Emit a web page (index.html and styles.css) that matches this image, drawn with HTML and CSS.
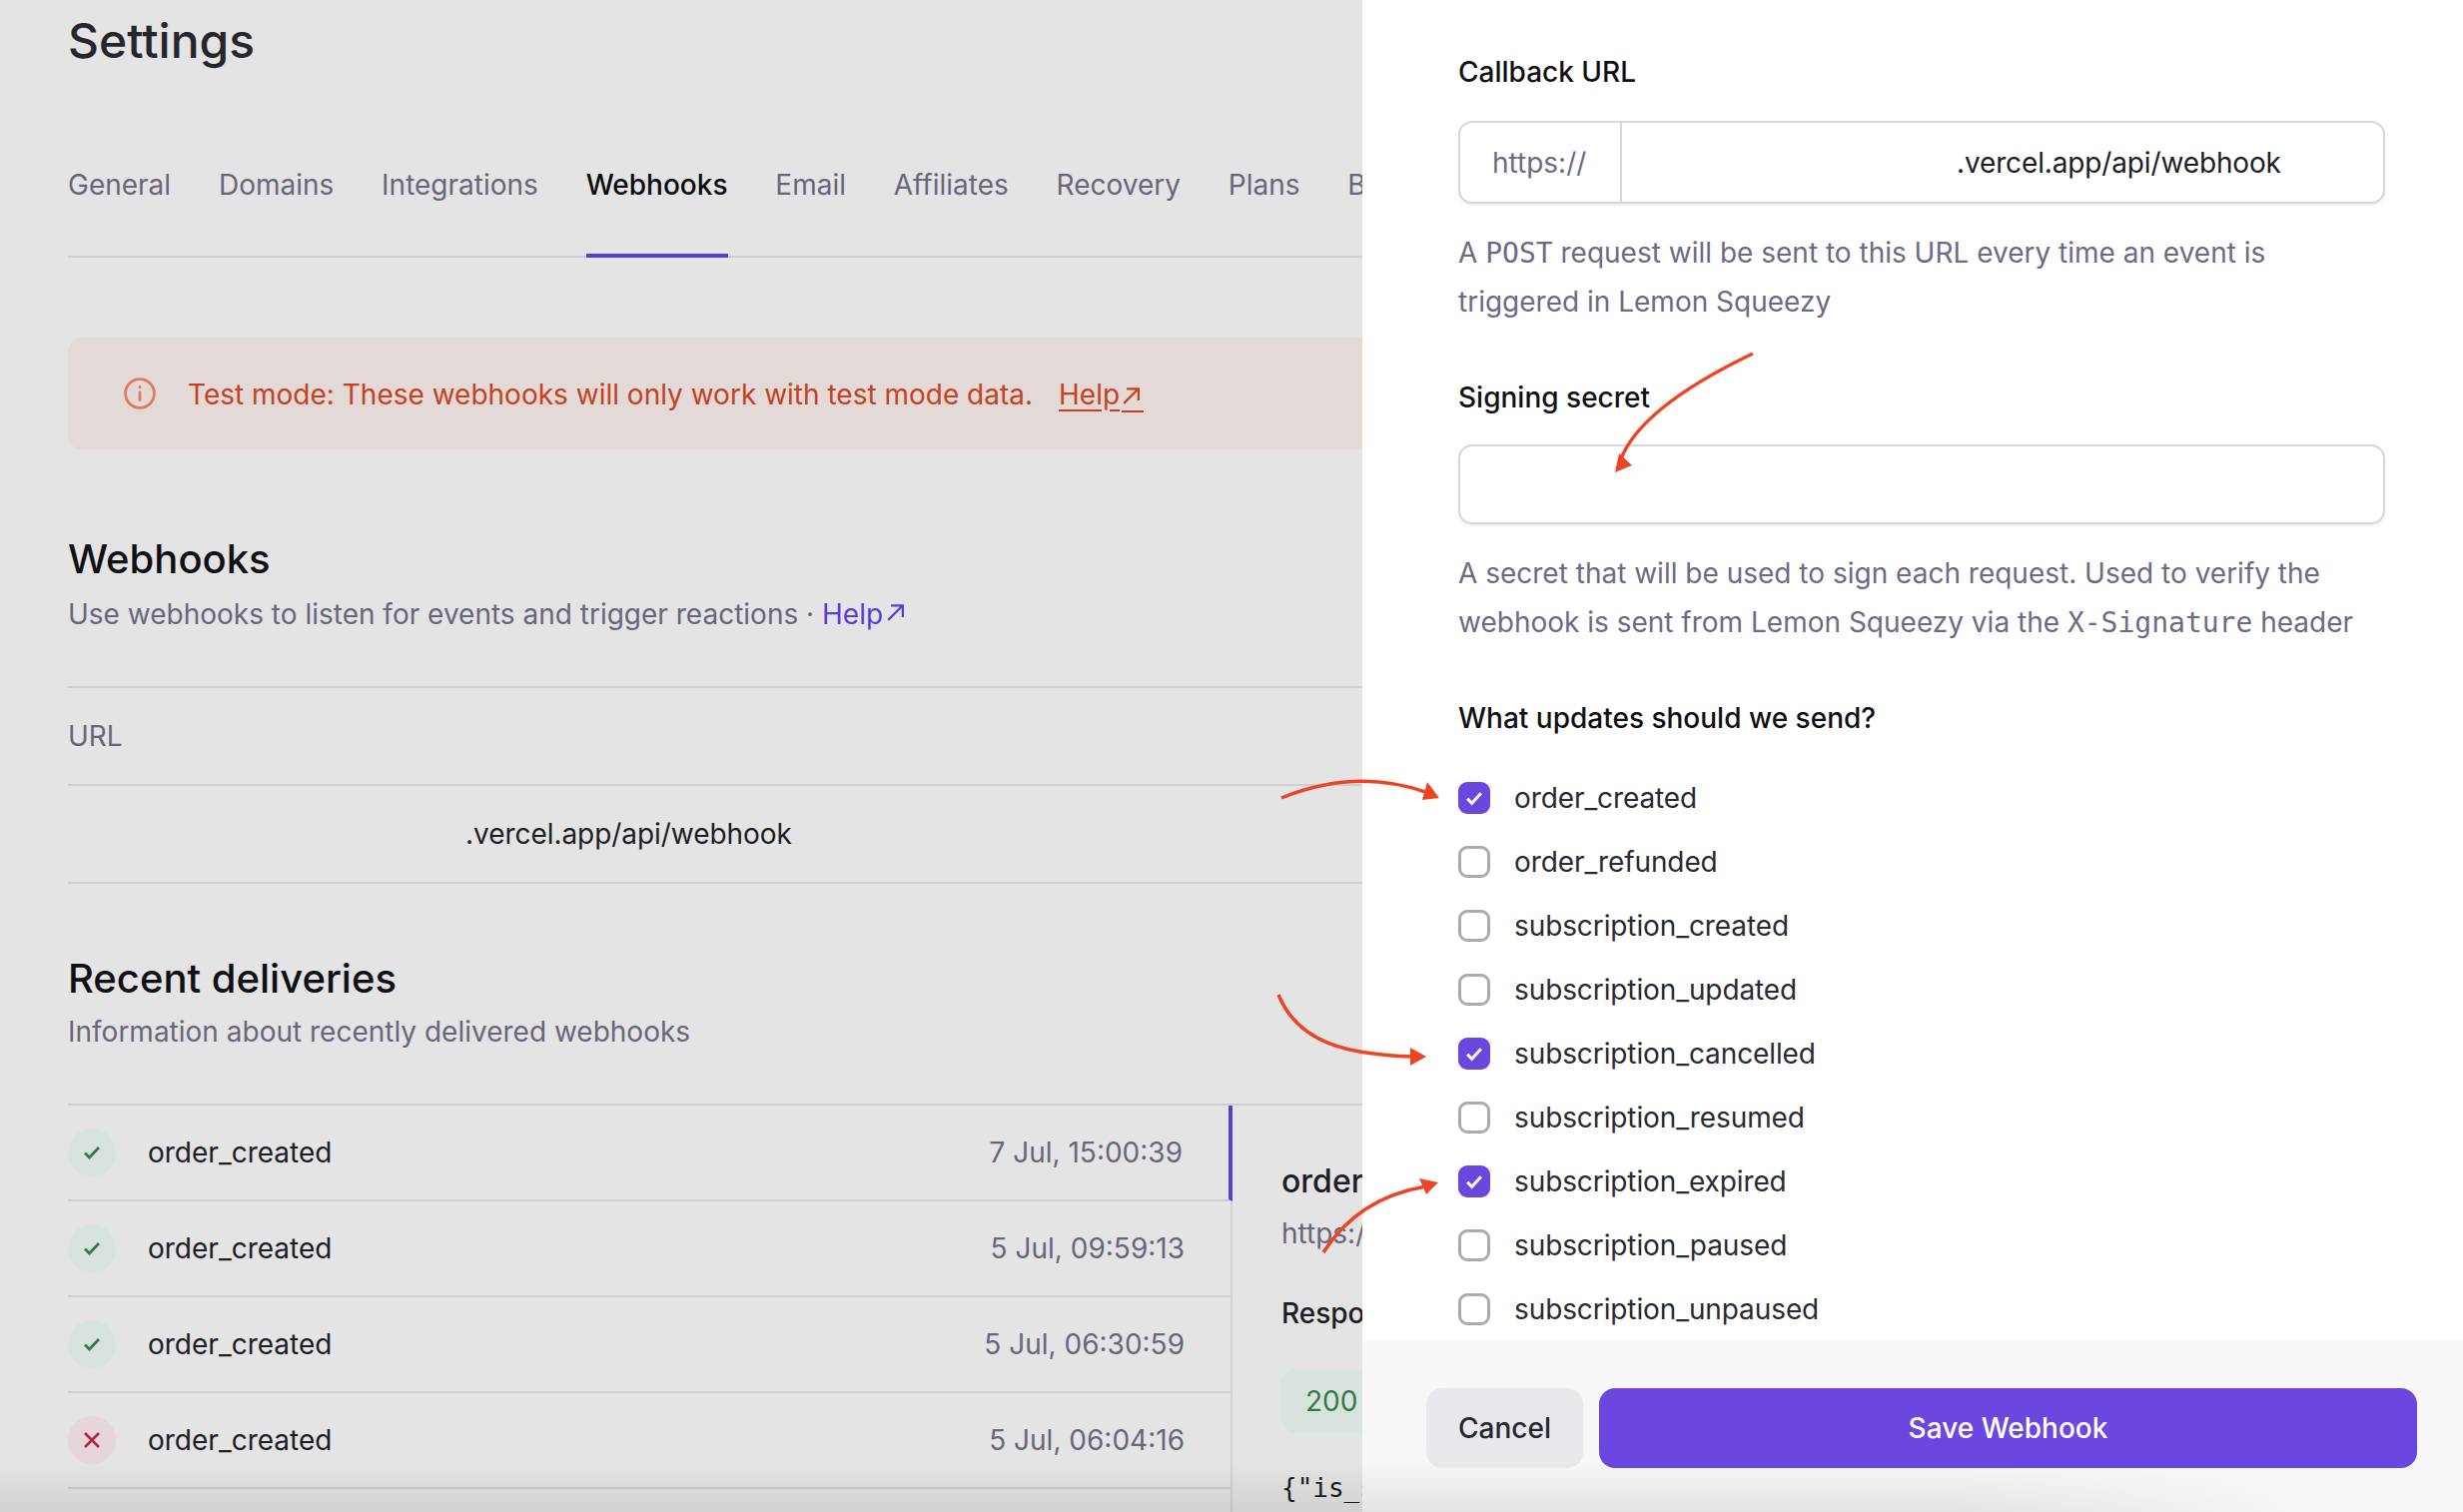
FILE: index.html
```html
<!DOCTYPE html>
<html lang="en">
<head>
    <meta charset="UTF-8" />
    <title>Settings - Webhooks</title>
    <link rel="stylesheet" href="styles.css">
</head>
<body>
    <div id="page">
        <main id="settings">
            <h1>Settings</h1>
            <nav class="tabs">
                <a href="#">General</a>
                <a href="#">Domains</a>
                <a href="#">Integrations</a>
                <a href="#" class="active">Webhooks</a>
                <a href="#">Email</a>
                <a href="#">Affiliates</a>
                <a href="#">Recovery</a>
                <a href="#">Plans</a>
                <a href="#">Billing</a>
            </nav>

            <div class="alert">
                <svg class="alert-icon" viewBox="0 0 32 32" fill="none" stroke="currentColor" stroke-width="2.800" stroke-linecap="round">
                    <circle cx="16" cy="16" r="14.400" />
                    <path d="M16 15v7.500" />
                    <path d="M16 9.500v.5" />
                </svg>
                <span>Test mode: These webhooks will only work with test mode data.</span>
                <a href="#" class="alert-help">Help<svg class="ext" viewBox="0 0 16 16" fill="none" stroke="currentColor" stroke-width="2"><path d="M2 15L14.500 2.500M4.500 2h10.500v10.500" /></svg></a>
            </div>

            <section class="webhooks">
                <h2>Webhooks</h2>
                <p class="sub">Use webhooks to listen for events and trigger reactions · <a href="#" class="link">Help<svg class="ext" viewBox="0 0 16 16" fill="none" stroke="currentColor" stroke-width="2"><path d="M2 15L14.500 2.500M4.500 2h10.500v10.500" /></svg></a></p>
                <div class="url-head">URL</div>
                <div class="url-row">.vercel.app/api/webhook</div>
            </section>

            <section class="deliveries">
                <h2>Recent deliveries</h2>
                <p class="sub">Information about recently delivered webhooks</p>
                <div class="delivery-grid">
                    <div class="delivery-list">
                        <div class="delivery active">
                            <span class="status ok"><svg viewBox="0 0 18 14" fill="none" stroke="currentColor" stroke-width="2.800"><path d="M2 7.500l4.500 4.500L16 2" /></svg></span>
                            <span class="event">order_created</span>
                            <span class="time">7 Jul, 15:00:39</span>
                        </div>
                        <div class="delivery">
                            <span class="status ok"><svg viewBox="0 0 18 14" fill="none" stroke="currentColor" stroke-width="2.800"><path d="M2 7.500l4.500 4.500L16 2" /></svg></span>
                            <span class="event">order_created</span>
                            <span class="time">5 Jul, 09:59:13</span>
                        </div>
                        <div class="delivery">
                            <span class="status ok"><svg viewBox="0 0 18 14" fill="none" stroke="currentColor" stroke-width="2.800"><path d="M2 7.500l4.500 4.500L16 2" /></svg></span>
                            <span class="event">order_created</span>
                            <span class="time">5 Jul, 06:30:59</span>
                        </div>
                        <div class="delivery">
                            <span class="status bad"><svg viewBox="0 0 18 18" fill="none" stroke="currentColor" stroke-width="2.600"><path d="M2 2l14 14M16 2L2 16" /></svg></span>
                            <span class="event">order_created</span>
                            <span class="time">5 Jul, 06:04:16</span>
                        </div>
                    </div>
                    <div class="delivery-detail">
                        <h3>order_created</h3>
                        <p class="detail-url">https://hooks.example.vercel.app/api/webhook</p>
                        <h4>Response</h4>
                        <div class="code-badge">200 OK</div>
                        <pre>{"is_success":true}</pre>
                    </div>
                </div>
            </section>
        </main>

        <aside id="panel">
            <form class="panel-body">
                <label class="field-label">Callback URL</label>
                <div class="input url-input">
                    <span class="prefix">https://</span>
                    <span class="value">.vercel.app/api/webhook</span>
                </div>
                <p class="help">A <code>POST</code> request will be sent to this URL every time an event is triggered in Lemon Squeezy</p>

                <label class="field-label secret-label">Signing secret</label>
                <div class="input secret-input"></div>
                <p class="help">A secret that will be used to sign each request. Used to verify the webhook is sent from Lemon Squeezy via the <code>X-Signature</code> header</p>

                <div class="field-label updates-label">What updates should we send?</div>
                <ul class="events">
                    <li><span class="check on"><svg viewBox="0 0 16 16" fill="none" stroke="currentColor" stroke-width="2.200"><path d="M3 8.500l3.300 3.300L13 4.500" /></svg></span>order_created</li>
                    <li><span class="check"></span>order_refunded</li>
                    <li><span class="check"></span>subscription_created</li>
                    <li><span class="check"></span>subscription_updated</li>
                    <li><span class="check on"><svg viewBox="0 0 16 16" fill="none" stroke="currentColor" stroke-width="2.200"><path d="M3 8.500l3.300 3.300L13 4.500" /></svg></span>subscription_cancelled</li>
                    <li><span class="check"></span>subscription_resumed</li>
                    <li><span class="check on"><svg viewBox="0 0 16 16" fill="none" stroke="currentColor" stroke-width="2.200"><path d="M3 8.500l3.300 3.300L13 4.500" /></svg></span>subscription_expired</li>
                    <li><span class="check"></span>subscription_paused</li>
                    <li><span class="check"></span>subscription_unpaused</li>
                </ul>
            </form>
            <footer class="panel-footer">
                <button type="button" class="btn-cancel">Cancel</button>
                <button type="button" class="btn-save">Save Webhook</button>
            </footer>
        </aside>

        <!-- bottom fade over the window edge -->
        <div class="bottom-fade"></div>

        <!-- hand drawn annotations on top of the screenshot -->
        <svg class="arrows" viewBox="0 0 2466 1514" fill="none" stroke="#ee4324" stroke-width="3.500">
            <path d="M1755 354C1680 390 1635 425 1622 462" />
            <path d="M1617 473L1621 454L1634 466Z" fill="#ee4324" stroke="none" />
            <path d="M1283 799C1330 780 1380 776 1430 794" />
            <path d="M1441 799L1424 801L1429 783Z" fill="#ee4324" stroke="none" />
            <path d="M1280 996C1300 1045 1350 1056 1414 1058" />
            <path d="M1428 1058L1412 1049V1067Z" fill="#ee4324" stroke="none" />
            <path d="M1325 1254C1350 1215 1385 1195 1428 1188" />
            <path d="M1440 1184L1421 1180L1428 1196Z" fill="#ee4324" stroke="none" />
        </svg>
    </div>
</body>
</html>
```

FILE: styles.css
```css
* {
    box-sizing: border-box;
}
html, body {
    margin: 0;
    padding: 0;
}
body {
    font-family: Inter, "Liberation Sans", sans-serif;
    font-size: 28px;
    line-height: 40px;
    color: #1d1d24;
    background-color: #e4e4e4;
}
a {
    text-decoration: none;
}
#page {
    position: relative;
    display: flex;
    width: 2466px;
    height: 1514px;
    overflow: hidden;
}

/* left side, dimmed settings page */
#settings {
    flex: 0 0 1364px;
    height: 1514px;
    padding: 13px 0 0 68px;
    overflow: hidden;
    background-color: #e4e4e4;
}
h1 {
    margin: 0;
    font-size: 48px;
    line-height: 56px;
    font-weight: 500;
    color: #26262d;
}
.tabs {
    display: flex;
    gap: 47.8px;
    width: 1400px;
    margin-top: 96px;
    border-bottom: 2px solid #cdcdd3;
}
.tabs a {
    padding-bottom: 49px;
    margin-bottom: -2px;
    border-bottom: 4px solid transparent;
    color: #69667c;
}
.tabs a.active {
    color: #0c0c10;
    font-weight: 500;
    border-bottom-color: #5a3ed0;
}
.alert {
    display: flex;
    align-items: center;
    width: 1400px;
    height: 112px;
    margin-top: 80px;
    padding-left: 56px;
    border-radius: 14px;
    background-color: #e3d9d6;
    color: #c5411f;
}
.alert span {
    padding-top: 2px;
}
.alert-icon {
    width: 32px;
    height: 32px;
    margin-right: 32px;
    color: #de7b5e;
}
.alert-help {
    margin-left: 26px;
    padding-top: 2px;
    color: #c5411f;
    text-decoration: underline;
    text-underline-offset: 5px;
}
.ext {
    width: 18px;
    height: 18px;
    margin: 0 0 8px 3px;
    vertical-align: middle;
}
.alert-help .ext {
    box-sizing: content-box;
    height: 18px;
    margin: 0 0 0 2px;
    padding: 0 4px 6px 0;
    border-bottom: 2px solid #c5411f;
    vertical-align: -8px;
}
h2 {
    margin: 0;
    font-size: 40px;
    line-height: 48px;
    font-weight: 500;
    color: #0f0f14;
}
.sub {
    margin: 11px 0 0;
    color: #69667c;
}
.link {
    color: #5a3ed0;
}
.webhooks {
    margin-top: 86px;
    width: 1400px;
}
.url-head {
    height: 98px;
    margin-top: 52px;
    padding-top: 28px;
    border-top: 2px solid #cdcdd3;
    color: #69667c;
}
.url-row {
    height: 100px;
    padding: 28px 0 0 398px;
    border-top: 2px solid #cdcdd3;
    border-bottom: 2px solid #cdcdd3;
    letter-spacing: -0.05px;
}
.deliveries {
    margin-top: 71px;
    width: 1400px;
}
.delivery-grid {
    display: flex;
    margin-top: 52px;
    border-top: 2px solid #cdcdd3;
}
.deliveries .sub {
    margin-top: 9px;
}
.delivery-list {
    flex: 0 0 1166px;
    border-right: 2px solid #d0d0d5;
    height: 420px;
}
.delivery {
    display: flex;
    align-items: center;
    height: 96px;
    margin-right: -2px;
    border-bottom: 2px solid #cdcdd3;
}
.delivery.active {
    border-right: 4px solid #5a3ed0;
}
.status {
    display: flex;
    align-items: center;
    justify-content: center;
    width: 48px;
    height: 48px;
    border-radius: 50%;
}
.status svg {
    width: 18px;
    height: 18px;
}
.status.ok {
    background-color: #d9e3de;
    color: #2f7a4b;
}
.status.bad {
    background-color: #e6d6da;
    color: #b8223f;
}
.event {
    margin-left: 32px;
    flex: 1;
}
.time {
    width: 245px;
    margin-right: 48px;
    color: #69667c;
    text-align: right;
}
.delivery.active .time {
    margin-right: 46px;
}
.delivery-detail {
    padding: 54px 0 0 49px;
}
h3 {
    margin: 0;
    font-size: 32px;
    line-height: 44px;
    font-weight: 500;
}
.detail-url {
    margin: 10px 0 0;
    color: #69667c;
    white-space: nowrap;
}
h4 {
    margin: 40px 0 0;
    font-size: 28px;
    line-height: 40px;
    font-weight: 500;
}
.code-badge {
    display: inline-block;
    height: 64px;
    margin-top: 36px;
    padding: 12px 24px;
    border-radius: 14px;
    background-color: #d9e3de;
    color: #2f7a4b;
}
pre {
    margin: 35px 0 0;
    font-family: "DejaVu Sans Mono", "Liberation Mono", monospace;
    font-size: 26px;
    line-height: 40px;
}

/* right side, the slide over form */
#panel {
    display: flex;
    flex-direction: column;
    flex: 0 0 1102px;
    height: 1514px;
    background-color: #fff;
}
.panel-body {
    flex: 1;
    height: 1342px;
    padding: 52px 78px 0 96px;
    overflow: hidden;
}
.field-label {
    display: block;
    font-weight: 500;
    color: #101015;
}
.input {
    height: 83px;
    margin-top: 29px;
    border: 2px solid #d6d6de;
    border-radius: 14px;
    box-shadow: 0 2px 2px rgba(0,0,0,0.06);
    background-color: #fff;
}
.url-input {
    display: flex;
    align-items: center;
}
.prefix {
    display: flex;
    align-items: center;
    width: 162px;
    height: 100%;
    padding-left: 32px;
    border-right: 2px solid #d6d6de;
    color: #6e6a85;
}
.value {
    padding-left: 335px;
    letter-spacing: -0.14px;
}
.help {
    margin: 25px 0 0;
    line-height: 49px;
    color: #6e6a85;
}
code {
    font-family: "DejaVu Sans Mono", "Liberation Mono", monospace;
    font-size: 28px;
}
.secret-label {
    margin-top: 51px;
}
.secret-input {
    height: 80px;
    margin-top: 27px;
}
.updates-label {
    margin-top: 51px;
}
.events {
    list-style: none;
    margin: 28px 0 0;
    padding: 0;
}
.events li {
    display: flex;
    align-items: center;
    gap: 24px;
    height: 64px;
    color: #2a2a32;
    letter-spacing: -0.1px;
}
.check {
    display: flex;
    align-items: center;
    justify-content: center;
    width: 32px;
    height: 32px;
    border: 3px solid #ababab;
    border-radius: 9px;
    background-color: #fff;
}
.check.on {
    border-color: #6b47e0;
    background-color: #6b47e0;
    color: #fff;
}
.check svg {
    width: 22px;
    height: 22px;
    flex: none;
}
.panel-footer {
    display: flex;
    gap: 16px;
    height: 172px;
    padding: 48px 46px 0 64px;
    background-color: #f7f7f7;
}
.panel-footer button {
    height: 80px;
    border: none;
    border-radius: 16px;
    font-family: inherit;
    font-size: 28px;
    font-weight: 500;
    cursor: pointer;
}
.btn-cancel {
    width: 157px;
    background-color: #e8e8ed;
    color: #26262d;
}
.btn-save {
    flex: 1;
    background-color: #6b47e0;
    color: #fff;
}
.bottom-fade {
    position: absolute;
    left: 0;
    right: 0;
    bottom: 0;
    height: 50px;
    background: linear-gradient(to bottom, rgba(0,0,0,0), rgba(0,0,0,0.08));
    -webkit-mask-image: linear-gradient(to right, #000 1950px, transparent 2330px);
    mask-image: linear-gradient(to right, #000 1950px, transparent 2330px);
}
.arrows {
    position: absolute;
    left: 0;
    top: 0;
    width: 2466px;
    height: 1514px;
    pointer-events: none;
}
```
